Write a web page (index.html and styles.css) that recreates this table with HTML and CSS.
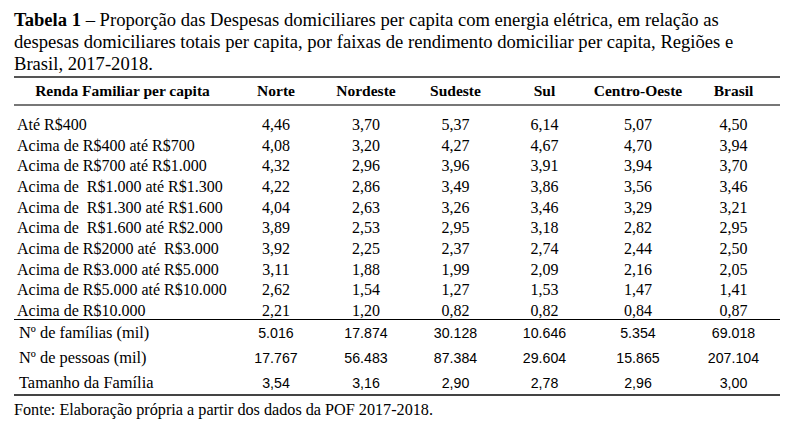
FILE: index.html
```html
<!DOCTYPE html>
<html lang="pt-BR">
<head>
<meta charset="utf-8">
<link rel="stylesheet" href="styles.css">
</head>
<body>
<div class="page">
  <p class="caption"><b>Tabela 1</b> – Proporção das Despesas domiciliares per capita com energia elétrica, em relação as despesas domiciliares totais per capita, por faixas de rendimento domiciliar per capita, Regiões e Brasil, 2017-2018.</p>
  <table class="tbl">
    <colgroup>
      <col class="c-label"><col class="c1"><col class="c2"><col class="c3"><col class="c4"><col class="c5"><col class="c6">
    </colgroup>
    <thead>
      <tr><th>Renda Familiar per capita</th><th>Norte</th><th>Nordeste</th><th>Sudeste</th><th>Sul</th><th>Centro-Oeste</th><th>Brasil</th></tr>
    </thead>
    <tbody class="body">
      <tr class="first"><td>Até R$400</td><td>4,46</td><td>3,70</td><td>5,37</td><td>6,14</td><td>5,07</td><td>4,50</td></tr>
      <tr><td>Acima de R$400 até R$700</td><td>4,08</td><td>3,20</td><td>4,27</td><td>4,67</td><td>4,70</td><td>3,94</td></tr>
      <tr><td>Acima de R$700 até R$1.000</td><td>4,32</td><td>2,96</td><td>3,96</td><td>3,91</td><td>3,94</td><td>3,70</td></tr>
      <tr><td>Acima de &nbsp;R$1.000 até R$1.300</td><td>4,22</td><td>2,86</td><td>3,49</td><td>3,86</td><td>3,56</td><td>3,46</td></tr>
      <tr><td>Acima de &nbsp;R$1.300 até R$1.600</td><td>4,04</td><td>2,63</td><td>3,26</td><td>3,46</td><td>3,29</td><td>3,21</td></tr>
      <tr><td>Acima de &nbsp;R$1.600 até R$2.000</td><td>3,89</td><td>2,53</td><td>2,95</td><td>3,18</td><td>2,82</td><td>2,95</td></tr>
      <tr><td>Acima de R$2000 até &nbsp;R$3.000</td><td>3,92</td><td>2,25</td><td>2,37</td><td>2,74</td><td>2,44</td><td>2,50</td></tr>
      <tr><td>Acima de R$3.000 até R$5.000</td><td>3,11</td><td>1,88</td><td>1,99</td><td>2,09</td><td>2,16</td><td>2,05</td></tr>
      <tr><td>Acima de R$5.000 até R$10.000</td><td>2,62</td><td>1,54</td><td>1,27</td><td>1,53</td><td>1,47</td><td>1,41</td></tr>
      <tr class="last"><td>Acima de R$10.000</td><td>2,21</td><td>1,20</td><td>0,82</td><td>0,82</td><td>0,84</td><td>0,87</td></tr>
    </tbody>
    <tbody class="totals">
      <tr class="r1"><td>Nº de famílias (mil)</td><td>5.016</td><td>17.874</td><td>30.128</td><td>10.646</td><td>5.354</td><td>69.018</td></tr>
      <tr class="r2"><td>Nº de pessoas (mil)</td><td>17.767</td><td>56.483</td><td>87.384</td><td>29.604</td><td>15.865</td><td>207.104</td></tr>
      <tr class="r3"><td>Tamanho da Família</td><td>3,54</td><td>3,16</td><td>2,90</td><td>2,78</td><td>2,96</td><td>3,00</td></tr>
    </tbody>
  </table>
  <p class="source">Fonte: Elaboração própria a partir dos dados da POF 2017-2018.</p>
</div>
</body>
</html>
```

FILE: styles.css
```css
html, body {
  margin: 0;
  padding: 0;
  background: #ffffff;
}
body {
  font-family: "Liberation Serif", "Times New Roman", serif;
  color: #000;
}
.page {
  padding: 9px 9px 0 14px;
}
.caption {
  margin: 0;
  font-size: 18.6px;
  line-height: 22px;
  width: 766px;
}
.tbl {
  border-collapse: collapse;
  table-layout: fixed;
  width: 766px;
  margin-top: 1px;
}
.c-label { width: 217px; }
.c1 { width: 90px; }
.c2 { width: 90px; }
.c3 { width: 89px; }
.c4 { width: 89px; }
.c5 { width: 98px; }
.c6 { width: 93px; }
.tbl th {
  font-size: 15.5px;
  font-weight: bold;
  height: 26px;
  padding: 0;
  border-top: 2px solid #555;
  border-bottom: 2px solid #777;
  text-align: center;
  vertical-align: middle;
}
.tbl td {
  padding: 0;
  text-align: center;
  white-space: nowrap;
}
.body td {
  font-size: 16px;
  line-height: 20.67px;
}
.body td:first-child {
  text-align: left;
  padding-left: 3px;
}
.body .first td {
  padding-top: 9px;
}
.body .last td {
  line-height: 16px;
  padding-top: 2.3px;
  border-bottom: 1.5px solid #000;
}
.totals td {
  font-family: "Liberation Sans", Arial, sans-serif;
  font-size: 14.2px;
  line-height: 18px;
  vertical-align: middle;
}
.totals td:first-child {
  font-family: "Liberation Serif", "Times New Roman", serif;
  font-size: 16.4px;
  text-align: left;
  padding-left: 5px;
}
.totals .r1 td { height: 25px; }
.totals .r2 td { height: 26px; }
.totals .r3 td {
  height: 23px;
  border-bottom: 2px solid #444;
}
.source {
  margin: 5px 0 0 0;
  font-size: 16.2px;
  line-height: 18px;
}
```
